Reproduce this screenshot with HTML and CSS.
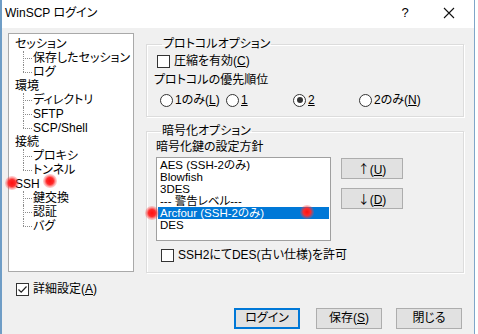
FILE: index.html
```html
<!DOCTYPE html>
<html lang="ja">
<head>
    <meta charset="UTF-8">
    <title>WinSCP ログイン</title>
    <link rel="stylesheet" href="styles.css">
</head>
<body>
    <div class="window">
        <div class="titlebar">
            <span class="title">WinSCP ログイン</span>
            <span class="help">?</span>
            <span class="close">
                <svg width="12" height="12" viewBox="0 0 12 12"><path d="M1 1L11 11M11 1L1 11" stroke="#111" stroke-width="1.1" fill="none"/></svg>
            </span>
        </div>

        <div class="content">
            <div class="main">
                <ul class="tree">
                    <li class="parent">セッション</li>
                    <li class="child">保存したセッション</li>
                    <li class="child last">ログ</li>
                    <li class="parent">環境</li>
                    <li class="child">ディレクトリ</li>
                    <li class="child">SFTP</li>
                    <li class="child last">SCP/Shell</li>
                    <li class="parent">接続</li>
                    <li class="child">プロキシ</li>
                    <li class="child last">トンネル</li>
                    <li class="parent">SSH</li>
                    <li class="child">鍵交換</li>
                    <li class="child">認証</li>
                    <li class="child last">バグ</li>
                </ul>

                <div class="options">
                    <fieldset class="group group-protocol">
                        <legend>プロトコルオプション</legend>
                        <label class="check"><span class="box"></span><span>圧縮を有効(<u>C</u>)</span></label>
                        <div class="caption caption-priority">プロトコルの優先順位</div>
                        <div class="radios">
                            <label class="radio"><span class="circle"></span><span>1のみ(<u>L</u>)</span></label>
                            <label class="radio"><span class="circle"></span><span><u>1</u></span></label>
                            <label class="radio"><span class="circle checked"></span><span><u>2</u></span></label>
                            <label class="radio"><span class="circle"></span><span>2のみ(<u>N</u>)</span></label>
                        </div>
                    </fieldset>

                    <fieldset class="group group-cipher">
                        <legend>暗号化オプション</legend>
                        <div class="caption">暗号化鍵の設定方針</div>
                        <div class="cipher-row">
                            <ul class="listbox">
                                <li>AES (SSH-2のみ)</li>
                                <li>Blowfish</li>
                                <li>3DES</li>
                                <li>--- 警告レベル---</li>
                                <li class="selected">Arcfour (SSH-2のみ)</li>
                                <li>DES</li>
                            </ul>
                            <div class="move-buttons">
                                <div class="btn"><span class="arrow">↑</span>(<u>U</u>)</div>
                                <div class="btn"><span class="arrow">↓</span>(<u>D</u>)</div>
                            </div>
                        </div>
                        <label class="check check-des"><span class="box"></span><span>SSH2にてDES(古い仕様)を許可</span></label>
                    </fieldset>
                </div>
            </div>

            <label class="check advanced">
                <span class="box">
                    <svg width="11" height="11" viewBox="0 0 11 11"><path d="M1.5 5.5L4.2 8.2L9.5 2.5" stroke="#222" stroke-width="1.2" fill="none"/></svg>
                </span><span>詳細設定(<u>A</u>)</span>
            </label>

            <div class="actions">
                <div class="btn btn-action default">ログイン</div>
                <div class="btn btn-action save">保存(<u>S</u>)</div>
                <div class="btn btn-action">閉じる</div>
            </div>
        </div>

        <span class="marker m1"></span>
        <span class="marker m2"></span>
        <span class="marker m3"></span>
        <span class="marker m4"></span>
    </div>
</body>
</html>
```

FILE: styles.css
```css
body {
    margin: 0;
    background-color: #FFFFFF;
    font-family: "Liberation Sans", "Noto Sans CJK JP", sans-serif;
    font-size: 12px;
    font-feature-settings: "palt";
    color: #000000;
}
u {
    text-decoration: underline;
    text-underline-offset: 1px;
}
.window {
    position: relative;
    width: 472px;
    height: 334px;
    border-left: 2px solid #6f9dc6;
    border-right: 1px solid #7fa6c9;
    background-color: #F0F0F0;
    overflow: hidden;
}
.titlebar {
    height: 28px;
    display: flex;
    align-items: center;
    background-color: #FFFFFF;
    padding-left: 3px;
}
.title {
    font-size: 12px;
    line-height: 14px;
    margin-top: -2px;
}
.help {
    margin-left: auto;
    width: 14px;
    text-align: center;
    font-size: 13px;
    margin-top: -3px;
}
.close {
    display: flex;
    justify-content: center;
    width: 46px;
    margin-left: 14px;
    margin-right: 2px;
    margin-top: -3px;
}
.content {
    padding: 5px 12px 0 6px;
}
.main {
    display: grid;
    grid-template-columns: 126px 318px;
    column-gap: 12px;
}
.tree {
    list-style: none;
    margin: 0;
    padding: 3px 0 0 6px;
    height: 234px;
    background-color: #FFFFFF;
    border: 1px solid #a9a9a9;
}
.tree li {
    height: 14px;
    line-height: 14px;
    white-space: nowrap;
}
.tree .child {
    position: relative;
    margin-left: 8px;
    padding-left: 10px;
}
.tree .child::before {
    content: "";
    position: absolute;
    left: 0;
    top: 7px;
    width: 9px;
    border-top: 1px dotted #8c8c8c;
}
.tree .child::after {
    content: "";
    position: absolute;
    left: 0;
    top: 0;
    height: 14px;
    border-left: 1px dotted #8c8c8c;
}
.tree .child.last::after {
    height: 7px;
}
.options {
    display: flex;
    flex-direction: column;
    gap: 7px;
    padding-top: 4px;
}
.group {
    margin: 0;
    min-width: 0;
    border: 1px solid #dcdcdc;
    box-shadow: inset 1px 1px #FFFFFF, 1px 1px #FFFFFF;
}
.group legend {
    padding: 0 1px;
    margin-left: 5px;
    line-height: 14px;
}
.group-protocol {
    height: 80px;
    box-sizing: border-box;
    padding: 3px 10px 0 10px;
}
.group-cipher {
    height: 149px;
    box-sizing: border-box;
    padding: 2px 9px 0 9px;
}
.check {
    display: flex;
    align-items: center;
    gap: 4px;
    height: 14px;
    line-height: 14px;
    white-space: nowrap;
}
.box {
    width: 11px;
    height: 11px;
    border: 1px solid #333333;
    background-color: #FFFFFF;
    display: flex;
    align-items: center;
    justify-content: center;
}
.caption {
    line-height: 14px;
    height: 14px;
    white-space: nowrap;
}
.caption-priority {
    margin: 5px 0 0 -3px;
}
.radios {
    display: grid;
    grid-template-columns: 66px 67px 66px 66px;
    margin: 6px 0 0 3px;
}
.radio {
    display: flex;
    align-items: center;
    gap: 2px;
    height: 14px;
    line-height: 14px;
    white-space: nowrap;
}
.circle {
    width: 11px;
    height: 11px;
    border: 1px solid #333333;
    border-radius: 50%;
    background-color: #FFFFFF;
    display: flex;
    align-items: center;
    justify-content: center;
}
.circle.checked::after {
    content: "";
    width: 6px;
    height: 6px;
    border-radius: 50%;
    background-color: #333333;
}
.cipher-row {
    display: flex;
    align-items: flex-start;
    margin-top: 3px;
}
.listbox {
    list-style: none;
    margin: 0;
    padding: 1px;
    width: 171px;
    height: 80px;
    background-color: #FFFFFF;
    border: 1px solid #a0a0a0;
}
.listbox li {
    height: 12px;
    line-height: 12px;
    font-size: 11.5px;
    padding-left: 2px;
    white-space: nowrap;
}
.listbox li.selected {
    background-color: #0078D7;
    color: #FFFFFF;
}
.move-buttons {
    display: flex;
    flex-direction: column;
    gap: 9px;
    margin: 1px 0 0 10px;
}
.btn {
    box-sizing: border-box;
    width: 62px;
    height: 21px;
    line-height: 19px;
    text-align: center;
    background-color: #E1E1E1;
    border: 1px solid #ADADAD;
    white-space: nowrap;
}
.arrow {
    font-family: "Noto Sans CJK JP", sans-serif;
    font-feature-settings: "palt";
    font-size: 12px;
}
.check-des {
    margin: 7px 0 0 5px;
}
.advanced {
    margin: 9px 0 0 8px;
}
.actions {
    display: flex;
    justify-content: flex-end;
    margin-top: 12px;
}
.btn-action {
    width: 66px;
    margin-left: 14px;
}
.btn-action.save {
    margin-left: 16px;
}
.btn-action.default {
    border: 2px solid #0078D7;
    line-height: 17px;
}
.marker {
    position: absolute;
    width: 14px;
    height: 14px;
    border-radius: 50%;
    background: radial-gradient(circle, #ff1010 0%, #ff2a2a 35%, rgba(255, 60, 60, 0.35) 60%, rgba(255, 80, 80, 0) 100%);
}
.m1 { left: 3px; top: 176px; }
.m2 { left: 41px; top: 174px; }
.m3 { left: 143px; top: 206px; }
.m4 { left: 298px; top: 205px; }
```
